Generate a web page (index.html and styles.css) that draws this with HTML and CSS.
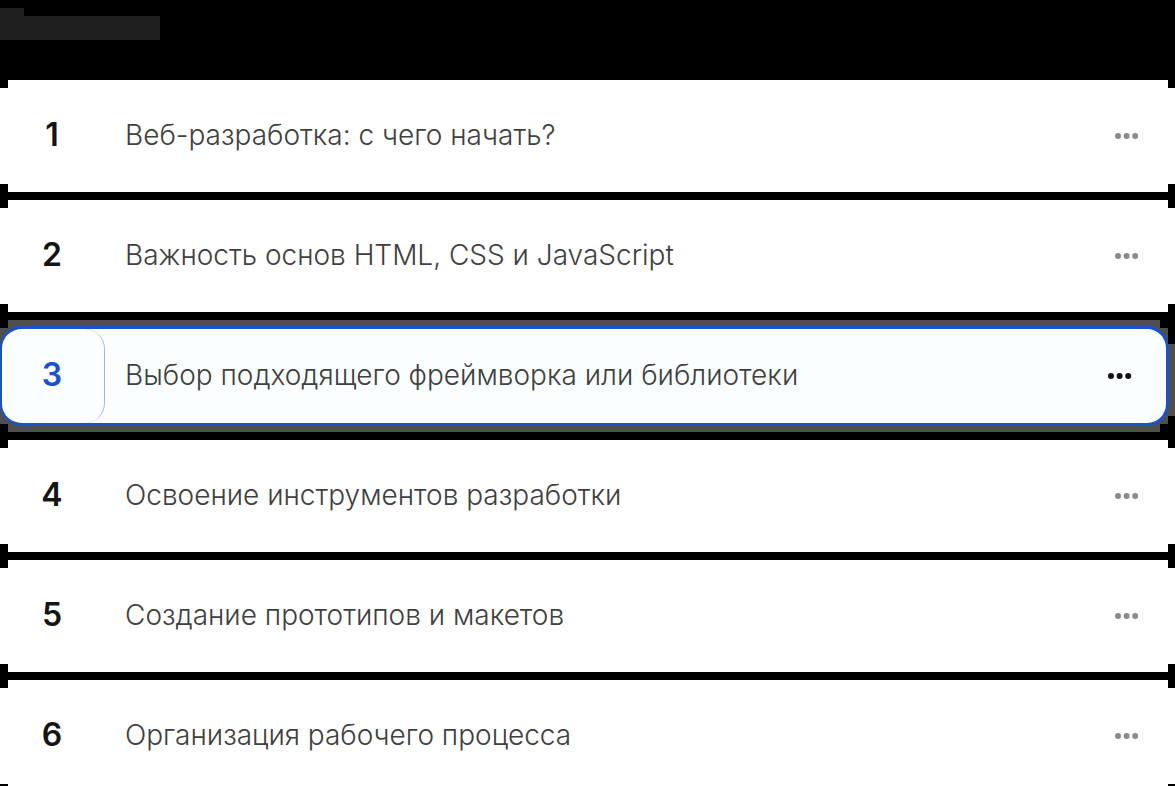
FILE: index.html
```html
<!DOCTYPE html>
<html lang="ru">
<head>
<meta charset="utf-8">
<title>План статьи</title>
<link rel="stylesheet" href="styles.css">
</head>
<body>
<svg class="sprite" aria-hidden="true"><symbol id="dots" viewBox="0 0 24 6"><circle cx="3" cy="3" r="3"/><circle cx="11.6" cy="3" r="3"/><circle cx="20.2" cy="3" r="3"/></symbol></svg>
<header class="header"><div class="tab"></div><div class="bar"></div></header>
<ol class="list">
<li class="row"><span class="number">1</span><span class="title">Веб-разработка: с чего начать?</span><button class="more" type="button" aria-label="Действия"><svg class="dots"><use href="#dots"/></svg></button></li>
<li class="row"><span class="number">2</span><span class="title">Важность основ HTML, CSS и JavaScript</span><button class="more" type="button" aria-label="Действия"><svg class="dots"><use href="#dots"/></svg></button></li>
<li class="row row-active"><div class="card"><span class="number">3</span><span class="title">Выбор подходящего фреймворка или библиотеки</span><button class="more" type="button" aria-label="Действия"><svg class="dots"><use href="#dots"/></svg></button></div></li>
<li class="row"><span class="number">4</span><span class="title">Освоение инструментов разработки</span><button class="more" type="button" aria-label="Действия"><svg class="dots"><use href="#dots"/></svg></button></li>
<li class="row"><span class="number">5</span><span class="title">Создание прототипов и макетов</span><button class="more" type="button" aria-label="Действия"><svg class="dots"><use href="#dots"/></svg></button></li>
<li class="row"><span class="number">6</span><span class="title">Организация рабочего процесса</span><button class="more" type="button" aria-label="Действия"><svg class="dots"><use href="#dots"/></svg></button></li>
</ol>
</body>
</html>
```
FILE: styles.css
```css
* { box-sizing: border-box; }
body {
  margin: 0;
  height: 100vh;
  overflow: hidden;
  background: #000;
  color: #404040;
  font-family: Inter, "Liberation Sans", sans-serif;
}
.sprite { display: none; }
.header { height: 80px; padding-top: 8px; }
.tab { width: 24px; height: 8px; background: #1f1f1f; }
.bar { width: 160px; height: 24px; background: #1f1f1f; }
.list {
  display: flex;
  flex-direction: column;
  gap: 8px;
  margin: 0;
  padding: 0;
  list-style: none;
}
.row {
  display: flex;
  align-items: center;
  height: 112px;
  padding: 0 36px 2px 0;
  background: #fff;
  clip-path: polygon(8px 0, calc(100% - 7px) 0, calc(100% - 7px) 8px, 100% 8px, 100% calc(100% - 8px), calc(100% - 7px) calc(100% - 8px), calc(100% - 7px) 100%, 8px 100%, 8px calc(100% - 8px), 0 calc(100% - 8px), 0 8px, 8px 8px);
}
.number {
  width: 104px;
  color: #141414;
  font-size: 32px;
  font-weight: 600;
  line-height: 40px;
  text-align: center;
}
.title {
  flex: 1;
  padding-left: 21px;
  font-size: 28px;
  font-weight: 300;
  line-height: 40px;
  white-space: nowrap;
}
.more {
  display: flex;
  padding: 2px 0 0;
  border: 0;
  background: none;
  color: #8a8a8a;
}
.dots { display: block; width: 24px; height: 6px; fill: currentColor; }
.row-active {
  padding: 6px 6px 6px 0;
  background: #4f4f4f;
  clip-path: polygon(8px 0, calc(100% - 15px) 0, calc(100% - 15px) 8px, calc(100% - 7px) 8px, calc(100% - 7px) 24px, 100% 24px, 100% calc(100% - 16px), calc(100% - 7px) calc(100% - 16px), calc(100% - 7px) calc(100% - 8px), calc(100% - 15px) calc(100% - 8px), calc(100% - 15px) 100%, 8px 100%, 8px calc(100% - 8px), 0 calc(100% - 8px), 0 8px, 8px 8px);
}
.card {
  display: flex;
  align-items: center;
  width: 100%;
  height: 100px;
  padding-right: 34px;
  border: 3px solid #1a52cc;
  border-left-width: 2px;
  border-radius: 22px;
  background: #fbfeff;
}
.card .number {
  display: flex;
  align-items: center;
  justify-content: center;
  align-self: stretch;
  width: 103px;
  padding: 0 2px 2px 0;
  border-right: 1px solid #9bb8e8;
  border-radius: 20px;
  color: #1a52cc;
}
.card .title { padding: 0 0 2px 20px; }
.card .more { padding-top: 0; color: #141414; }
```
